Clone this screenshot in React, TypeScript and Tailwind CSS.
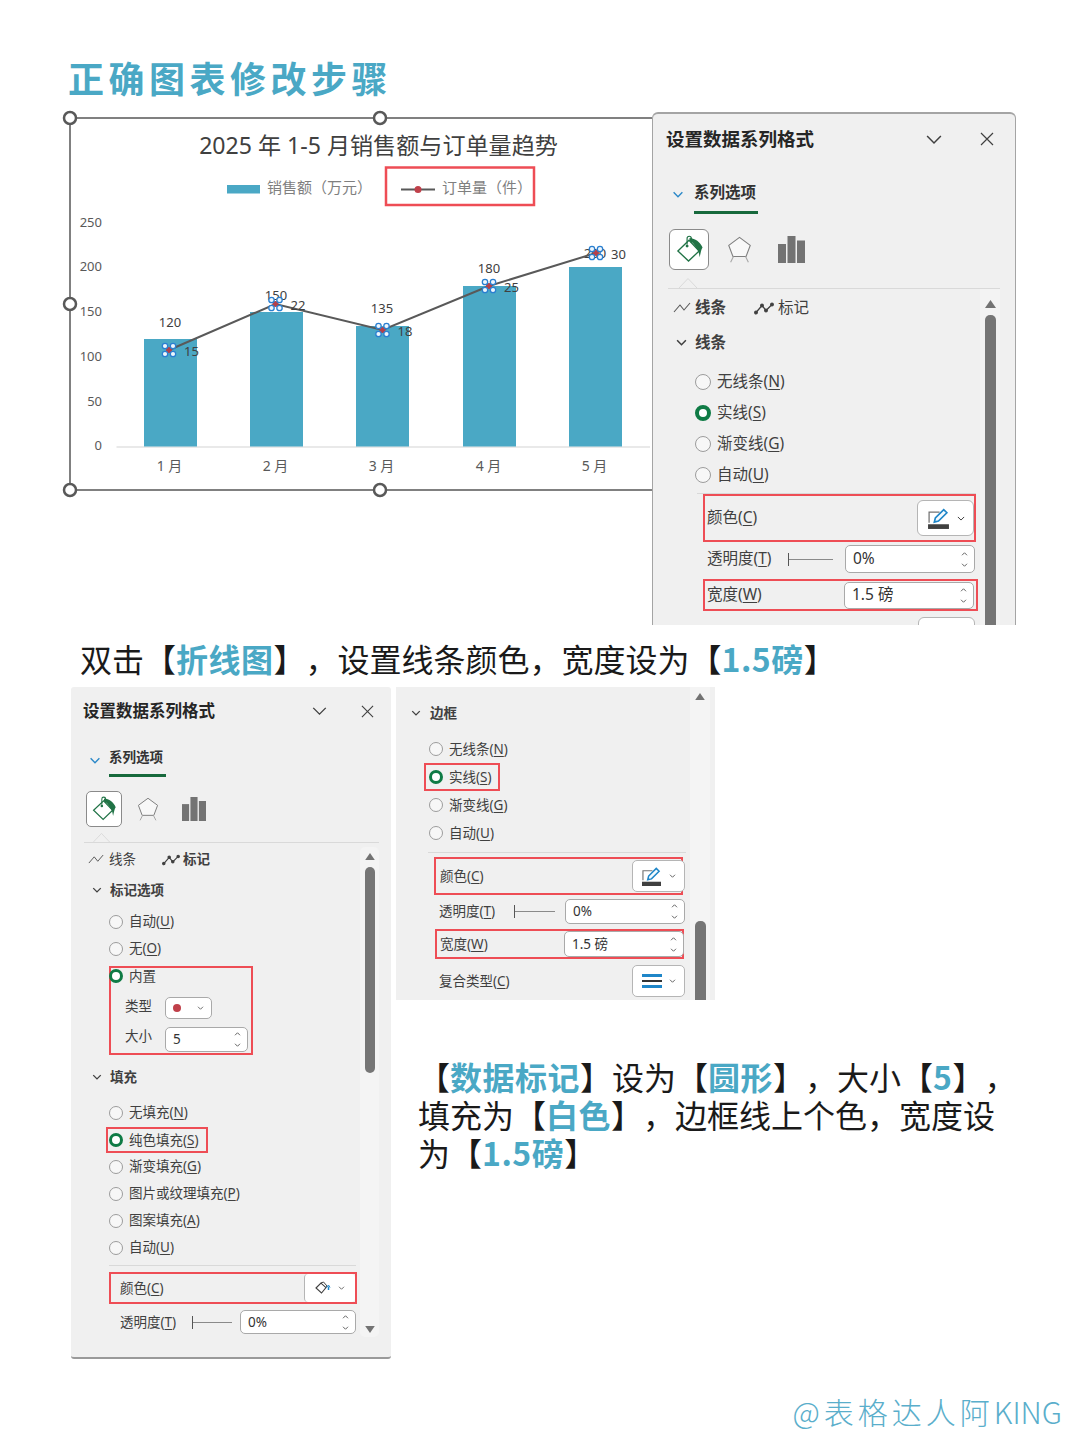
const TEAL = '#4aa8c5'
const BARS = [
  { x: 144, top: 339, label: '120', ly: 322 },
  { x: 250, top: 312, label: '150', ly: 295 },
  { x: 356, top: 326, label: '135', ly: 308 },
  { x: 463, top: 286, label: '180', ly: 268 },
  { x: 569, top: 267, label: '200', ly: 253 },
]
const POINTS = [
  { x: 169, y: 350, v: '15' },
  { x: 275.5, y: 304, v: '22' },
  { x: 382.5, y: 330, v: '18' },
  { x: 489, y: 286, v: '25' },
  { x: 596, y: 253, v: '30' },
]
const HANDLES = [[70, 118], [380, 118], [70, 304], [70, 490], [380, 490]]
const RED = '#ee4d55'

function Chart() {
  return (
    <svg viewBox="60 108 592 392" className="block h-[392px] w-[592px] shrink-0" fontFamily="'Noto Sans','Noto Sans CJK SC',sans-serif">
      <path d="M652 118H70V490H652" fill="none" stroke="#808080" strokeWidth="2" />
      {HANDLES.map(([x, y]) => (
        <circle key={`${x}-${y}`} cx={x} cy={y} r="6" fill="#fff" stroke="#595959" strokeWidth="2.5" />
      ))}
      <text x="378.5" y="154" textAnchor="middle" fontSize="23.1" fill="#404040">2025 年 1-5 月销售额与订单量趋势</text>
      <rect x="227" y="185" width="33" height="8.5" fill={TEAL} />
      <text x="267" y="193" fontSize="15" fill="#7f7f7f">销售额（万元）</text>
      <rect x="386" y="167.5" width="148" height="37.5" fill="none" stroke={RED} strokeWidth="2.5" />
      <path d="M401 189.5H435" stroke="#595959" strokeWidth="2" />
      <circle cx="418" cy="189.5" r="3.5" fill="#c0404a" />
      <text x="442" y="193" fontSize="15" fill="#7f7f7f">订单量（件）</text>
      {[['250', 222], ['200', 266], ['150', 311], ['100', 356], ['50', 401], ['0', 445]].map(([t, y]) => (
        <text key={t} x="102" y={Number(y) + 4.5} textAnchor="end" fontSize="13" fill="#595959">{t}</text>
      ))}
      <path d="M116.5 447H650" stroke="#e2e2e2" strokeWidth="1.5" />
      {BARS.map(b => (
        <rect key={b.x} x={b.x} y={b.top} width="53" height={446.5 - b.top} fill={TEAL} />
      ))}
      {BARS.map((b, i) => (
        <g key={b.label} fontSize="13" fill="#404040">
          <text x={b.x + 26} y={b.ly + 4.5} textAnchor="middle">{b.label}</text>
          <text x={b.x + 25.5} y="471" textAnchor="middle" fontSize="14" fill="#595959">{i + 1} 月</text>
        </g>
      ))}
      <polyline points={POINTS.map(p => `${p.x},${p.y}`).join(' ')} fill="none" stroke="#595959" strokeWidth="2" />
      {POINTS.map(p => (
        <g key={p.v}>
          <circle cx={p.x} cy={p.y} r="3" fill="#b5404a" />
          {[[-4, -4], [4, -4], [-4, 4], [4, 4]].map(([dx, dy]) => (
            <circle key={`${dx}${dy}`} cx={p.x + dx} cy={p.y + dy} r="2.7" fill="#eef6fd" stroke="#2a7fd0" strokeWidth="1.3" />
          ))}
          <text x={p.x + 15} y={p.y + 6} fontSize="13" fill="#404040">{p.v}</text>
        </g>
      ))}
    </svg>
  )
}

function Chevron({ className, color = '#404040', sw = 1.6 }: { className: string; color?: string; sw?: number }) {
  return (
    <svg viewBox="0 0 12 8" className={className} fill="none" stroke={color} strokeWidth={sw}>
      <path d="M1 1.5 6 6.5 11 1.5" />
    </svg>
  )
}

function Close({ className }: { className: string }) {
  return (
    <svg viewBox="0 0 14 14" className={className} fill="none" stroke="#404040" strokeWidth="1.2">
      <path d="M1 1 13 13M13 1 1 13" />
    </svg>
  )
}

function FillIcon({ className }: { className: string }) {
  return (
    <svg viewBox="0 0 30 30" className={className} fill="none">
      <path d="M3 16.5 14.5 5.5 25 16.5 14 27Z" stroke="#217346" strokeWidth="1.4" />
      <path d="M12.5 10V3.5a2.2 2.2 0 0 1 4.4 0V8" stroke="#217346" strokeWidth="1.2" />
      <circle cx="12.5" cy="11.5" r="1.5" fill="#217346" />
      <path d="M15 3c6 .5 11 4 13.5 10-1.5 2-2 6-3 10-.5-3-1-7-3.500-9.500C20 10 18 7 15 6Z" fill="#217346" />
    </svg>
  )
}

function PentagonIcon({ className }: { className: string }) {
  return (
    <svg viewBox="0 0 26 30" className={className} fill="none" stroke="#808080">
      <path d="M13 1.500 24.500 10 20 22H6L1.500 10Z" fill="#f8f8f8" strokeWidth="1.2" />
      <path d="M6.500 22 3.500 28M19.500 22 22.500 28" stroke="#a8a8a8" strokeWidth="1.2" />
    </svg>
  )
}

function BarsIcon({ className }: { className: string }) {
  return (
    <svg viewBox="0 0 27 27" className={className} fill="#737373">
      <rect x="0" y="8" width="8" height="19" />
      <rect x="9.500" y="0" width="8" height="27" />
      <rect x="19" y="4.500" width="8" height="22.500" />
    </svg>
  )
}

function LineTabIcon({ className }: { className: string }) {
  return (
    <svg viewBox="0 0 18 12" className={className} fill="none" stroke="#595959" strokeWidth="1.1">
      <path d="M1 10 7 3 11 8 17 1" />
    </svg>
  )
}

function MarkerTabIcon({ className }: { className: string }) {
  return (
    <svg viewBox="0 0 20 12" className={className} fill="#404040" stroke="#404040" strokeWidth="1.3">
      <path d="M2 10 8 3 12 8 18 2" fill="none" />
      <circle cx="2" cy="10" r="1.300" />
      <circle cx="8" cy="3" r="1.300" />
      <circle cx="12" cy="8" r="1.300" />
      <circle cx="18" cy="2" r="1.300" />
    </svg>
  )
}

function PenIcon({ className }: { className: string }) {
  return (
    <svg viewBox="0 0 22 20" className={className} fill="none">
      <path d="M2 14V4H12" stroke="#737373" strokeWidth="1.2" />
      <path d="M7 13.500 8 9.500 16 1.500 19 4.500 11 12.500Z" fill="#f4fbff" stroke="#1f86c8" strokeWidth="1.6" />
      <rect x="1" y="15.500" width="20" height="4.500" fill="#404040" />
    </svg>
  )
}

function BucketSmall({ className }: { className: string }) {
  return (
    <svg viewBox="0 0 16 14" className={className} fill="none">
      <path d="M1 7 6 2 11 6.500 6.500 12Z" stroke="#404040" strokeWidth="1.100" />
      <path d="M6 2 8.500 1 12 5 11 6.500Z" fill="#fff" stroke="#404040" strokeWidth="1" />
      <path d="M13.500 5.500v3.500" stroke="#1f86c8" strokeWidth="1.500" />
      <path d="M11.500 6.500 13.500 4 15 6.500" stroke="#1f86c8" strokeWidth="1" />
    </svg>
  )
}

function Triangle({ className, down }: { className: string; down?: boolean }) {
  return (
    <svg viewBox="0 0 11 8" className={className} fill="#737373">
      <path d={down ? 'M0 0H11L5.500 8Z' : 'M5.500 0 11 8H0Z'} />
    </svg>
  )
}

function Notch({ className }: { className: string }) {
  return (
    <svg viewBox="0 0 18 10" className={className} fill="none" stroke="#d9d9d9">
      <path d="M0 10 9 .5 18 10" />
    </svg>
  )
}

function Acc({ t, k }: { t: string; k: string }) {
  return (
    <span>
      {t}(<u className="underline-offset-2">{k}</u>)
    </span>
  )
}

function Dot({ on, big }: { on?: boolean; big?: boolean }) {
  if (big) {
    return on
      ? <span className="h-[16px] w-[16px] shrink-0 rounded-full border-[4px] border-[#0f7b45] bg-white" />
      : <span className="h-[16px] w-[16px] shrink-0 rounded-full border border-[#9c9c9c] bg-[#f7f7f7]" />
  }
  return on
    ? <span className="h-[14px] w-[14px] shrink-0 rounded-full border-[3.500px] border-[#0f7b45] bg-white" />
    : <span className="h-[14px] w-[14px] shrink-0 rounded-full border border-[#9c9c9c] bg-[#f7f7f7]" />
}

function Spin({ value, className }: { value: string; className: string }) {
  return (
    <div className={`flex items-center justify-between rounded-[5px] border border-[#a9a9a9] bg-white pl-[7px] pr-[6px] text-[#333] ${className}`}>
      <span>{value}</span>
      <div className="flex flex-col gap-[7px]">
        <Chevron className="h-[4px] w-[7px] rotate-180" color="#333" sw={1.5} />
        <Chevron className="h-[4px] w-[7px]" color="#333" sw={1.5} />
      </div>
    </div>
  )
}

function Slider({ className }: { className: string }) {
  return (
    <div className={`flex items-center ${className}`}>
      <span className="h-[13px] w-px bg-[#555]" />
      <span className="h-px flex-1 bg-[#8a8a8a]" />
    </div>
  )
}

function PanelOne() {
  return (
    <div className="h-[513px] w-[364px] shrink-0 overflow-hidden rounded-t-[6px] border-x-[1.500px] border-t-2 border-[#a4a4a4] bg-[#f0f0f0] text-[15.500px] text-[#404040]">
      <div className="flex h-[50px] items-center pl-[13px] pr-[21px]">
        <span className="text-[18.500px] font-bold leading-none text-[#262626]">设置数据系列格式</span>
        <Chevron className="ml-auto h-[11px] w-[18px]" sw={1.1} />
        <Close className="ml-[37px] h-[14px] w-[14px]" />
      </div>
      <div className="flex h-[50px] pl-[19px]">
        <Chevron className="mr-[10px] mt-[27px] h-[7px] w-[12px]" color="#2b88c8" />
        <div className="w-[64px]">
          <div className="pt-[19px] text-[15.500px] font-bold leading-[18px] text-[#333]">系列选项</div>
          <div className="mt-[10px] h-[3px] bg-[#17693c]" />
        </div>
      </div>
      <div className="ml-[16px] mt-[15px] flex h-[41px] items-center">
        <div className="flex h-[41px] w-[40px] items-center justify-center rounded-[6px] border border-[#8a8a8a] bg-white">
          <FillIcon className="h-[29px] w-[29px]" />
        </div>
        <PentagonIcon className="ml-[18px] h-[28px] w-[25px]" />
        <BarsIcon className="ml-[26px] h-[27px] w-[27px]" />
      </div>
      <Notch className="ml-[26px] mt-[8px] block h-[10px] w-[18px]" />
      <div className="ml-[15px] mr-[15px] h-px bg-[#d9d9d9]" />
      <div className="flex h-[340px]">
        <div className="w-[327px] shrink-0">
          <div className="flex h-[38px] items-center pl-[20px]">
            <LineTabIcon className="mr-[4px] h-[12px] w-[18px]" />
            <span className="font-bold">线条</span>
            <MarkerTabIcon className="ml-[28px] mr-[4px] h-[13px] w-[20px]" />
            <span>标记</span>
          </div>
          <div className="flex h-[31px] items-center pl-[23px]">
            <Chevron className="mr-[8px] h-[7px] w-[11px]" sw={1.8} />
            <span className="font-bold">线条</span>
          </div>
          <div className="mt-[8px] flex flex-col pl-[42px]">
            <div className="flex h-[31px] items-center gap-[6px]"><Dot big /><Acc t="无线条" k="N" /></div>
            <div className="flex h-[31px] items-center gap-[6px]"><Dot big on /><Acc t="实线" k="S" /></div>
            <div className="flex h-[31px] items-center gap-[6px]"><Dot big /><Acc t="渐变线" k="G" /></div>
            <div className="flex h-[31px] items-center gap-[6px]"><Dot big /><Acc t="自动" k="U" /></div>
          </div>
          <div className="ml-[44px] mt-[3px] h-px w-[279px] bg-[#d9d9d9]" />
          <div className="ml-[50px] flex h-[48px] w-[273px] items-center justify-between border-2 border-[#ee4d55] pl-[2px] pr-0">
            <Acc t="颜色" k="C" />
            <div className="flex h-[36px] w-[57px] items-center justify-center gap-[7px] rounded-[6px] border border-[#b5b5b5] bg-white">
              <PenIcon className="h-[21px] w-[23px]" />
              <Chevron className="h-[5px] w-[8px]" sw={1.6} />
            </div>
          </div>
          <div className="ml-[54px] mt-[3px] flex h-[28px] w-[268px] items-center">
            <Acc t="透明度" k="T" />
            <Slider className="ml-[17px] w-[45px]" />
            <Spin value="0%" className="ml-auto h-[28px] w-[130px]" />
          </div>
          <div className="ml-[50px] mt-[6px] flex h-[32px] w-[275px] items-center border-2 border-[#ee4d55] pl-[2px]">
            <Acc t="宽度" k="W" />
            <Spin value="1.5 磅" className="ml-auto mr-[2px] h-[27px] w-[130px]" />
          </div>
          <div className="ml-[265px] mt-[6px] h-[30px] w-[57px] rounded-[6px] border border-[#b5b5b5] bg-white" />
        </div>
        <div className="flex w-[20px] shrink-0 flex-col items-center bg-[#f3f3f3] pt-[11px]">
          <Triangle className="h-[8px] w-[11px]" />
          <div className="mt-[7px] w-[11px] flex-1 rounded-t-[5px] bg-[#767676]" />
        </div>
      </div>
    </div>
  )
}

function PanelTwo() {
  return (
    <div className="h-[672px] w-[320px] shrink-0 rounded-[3px] border-b-2 border-[#9a9a9a] bg-[#f0f0f0] text-[13.500px] text-[#404040]">
      <div className="flex h-[48px] items-center pl-[12px] pr-[17px]">
        <span className="text-[16.500px] font-bold leading-none text-[#262626]">设置数据系列格式</span>
        <Chevron className="ml-auto h-[10px] w-[17px]" sw={1.1} />
        <Close className="ml-[33px] h-[13px] w-[13px]" />
      </div>
      <div className="flex h-[41px] pl-[18px]">
        <Chevron className="mr-[8px] mt-[22px] h-[7px] w-[12px]" color="#2b88c8" />
        <div className="w-[57px]">
          <div className="pt-[14px] text-[13.500px] font-bold leading-[16px] text-[#333]">系列选项</div>
          <div className="mt-[9px] h-[2.500px] bg-[#17693c]" />
        </div>
      </div>
      <div className="ml-[15px] mt-[15px] flex h-[36px] items-center">
        <div className="flex h-[36px] w-[36px] items-center justify-center rounded-[5px] border border-[#8a8a8a] bg-white">
          <FillIcon className="h-[26px] w-[26px]" />
        </div>
        <PentagonIcon className="ml-[15px] h-[25px] w-[22px]" />
        <BarsIcon className="ml-[23px] h-[24px] w-[24px]" />
      </div>
      <Notch className="ml-[22px] mt-[6px] block h-[9px] w-[17px]" />
      <div className="ml-[13px] mr-[12px] h-px bg-[#d9d9d9]" />
      <div className="flex h-[494px]">
        <div className="w-[289px] shrink-0">
          <div className="flex h-[33px] items-center pl-[17px]">
            <LineTabIcon className="mr-[5px] h-[11px] w-[16px]" />
            <span>线条</span>
            <MarkerTabIcon className="ml-[26px] mr-[3px] h-[12px] w-[18px]" />
            <span className="font-bold">标记</span>
          </div>
          <div className="flex h-[28px] items-center pl-[21px]">
            <Chevron className="mr-[8px] h-[6px] w-[10px]" sw={1.8} />
            <span className="font-bold">标记选项</span>
          </div>
          <div className="mt-[4px] flex flex-col pl-[38px]">
            <div className="flex h-[27px] items-center gap-[6px]"><Dot /><Acc t="自动" k="U" /></div>
            <div className="flex h-[27px] items-center gap-[6px]"><Dot /><Acc t="无" k="O" /></div>
          </div>
          <div className="ml-[38px] mt-[4px] h-[89px] w-[144px] border-2 border-[#ee4d55]">
            <div className="-ml-[2px] flex h-[16px] items-center gap-[6px]"><Dot on /><span>内置</span></div>
            <div className="mt-[13px] flex h-[22px] items-center">
              <span className="-mt-[4px] ml-[14px]">类型</span>
              <div className="ml-[13px] flex h-[22px] w-[47px] items-center justify-between rounded-[5px] border border-[#a9a9a9] bg-white px-[7px]">
                <span className="h-[8px] w-[8px] rounded-full bg-[#c0404a]" />
                <Chevron className="h-[4px] w-[7px]" color="#333" sw={1.4} />
              </div>
            </div>
            <div className="mt-[8px] flex h-[25px] items-center">
              <span className="-mt-[7px] ml-[14px]">大小</span>
              <Spin value="5" className="ml-[13px] h-[25px] w-[83px]" />
            </div>
          </div>
          <div className="mt-[8px] flex h-[28px] items-center pl-[21px]">
            <Chevron className="mr-[8px] h-[6px] w-[10px]" sw={1.8} />
            <span className="font-bold">填充</span>
          </div>
          <div className="mt-[8px] flex h-[27px] items-center gap-[6px] pl-[38px]"><Dot /><Acc t="无填充" k="N" /></div>
          <div className="ml-[35px] mt-[1px] flex h-[26px] w-[102px] items-center gap-[6px] border-2 border-[#ee4d55] pl-[1px]"><Dot on /><Acc t="纯色填充" k="S" /></div>
          <div className="flex flex-col pl-[38px]">
            <div className="flex h-[27px] items-center gap-[6px]"><Dot /><Acc t="渐变填充" k="G" /></div>
            <div className="flex h-[27px] items-center gap-[6px]"><Dot /><Acc t="图片或纹理填充" k="P" /></div>
            <div className="flex h-[27px] items-center gap-[6px]"><Dot /><Acc t="图案填充" k="A" /></div>
            <div className="flex h-[27px] items-center gap-[6px]"><Dot /><Acc t="自动" k="U" /></div>
          </div>
          <div className="ml-[38px] mt-[4px] h-px w-[247px] bg-[#d9d9d9]" />
          <div className="ml-[38px] mt-[6px] flex h-[32px] w-[248px] items-center justify-between border-2 border-[#ee4d55] pl-[9px]">
            <Acc t="颜色" k="C" />
            <div className="flex h-[28px] w-[51px] items-center justify-center gap-[7px] rounded-[4px] border-l border-[#b5b5b5] bg-white">
              <BucketSmall className="h-[14px] w-[16px]" />
              <Chevron className="h-[4px] w-[7px]" sw={1.5} />
            </div>
          </div>
          <div className="ml-[49px] mt-[6px] flex h-[24px] w-[236px] items-center">
            <Acc t="透明度" k="T" />
            <Slider className="ml-[16px] w-[40px]" />
            <Spin value="0%" className="ml-auto h-[24px] w-[116px]" />
          </div>
        </div>
        <div className="mt-[4px] flex h-[490px] w-[19px] shrink-0 flex-col items-center rounded-[5px] bg-[#f4f4f4] pt-[6px]">
          <Triangle className="h-[7px] w-[10px]" />
          <div className="mt-[7px] h-[206px] w-[10px] rounded-[5px] bg-[#767676]" />
          <Triangle down className="mt-auto mb-[4px] h-[7px] w-[10px]" />
        </div>
      </div>
    </div>
  )
}

function PanelThree() {
  return (
    <div className="flex h-[313px] w-[319px] overflow-hidden bg-[#f0f0f0] text-[13.500px] text-[#404040]">
      <div className="w-[294px] shrink-0">
        <div className="mt-[12px] flex h-[28px] items-center pl-[15px]">
          <Chevron className="mr-[9px] h-[6px] w-[10px]" sw={1.8} />
          <span className="font-bold">边框</span>
        </div>
        <div className="mt-[8px] flex h-[28px] items-center gap-[6px] pl-[33px]"><Dot /><Acc t="无线条" k="N" /></div>
        <div className="ml-[28px] flex h-[28px] w-[76px] items-center gap-[6px] border-2 border-[#ee4d55] pl-[3px]"><Dot on /><Acc t="实线" k="S" /></div>
        <div className="flex h-[28px] items-center gap-[6px] pl-[33px]"><Dot /><Acc t="渐变线" k="G" /></div>
        <div className="flex h-[28px] items-center gap-[6px] pl-[33px]"><Dot /><Acc t="自动" k="U" /></div>
        <div className="ml-[32px] mt-[5px] h-px w-[258px] bg-[#d9d9d9]" />
        <div className="ml-[38px] mt-[4px] flex h-[38px] w-[249px] items-center justify-between border-2 border-[#ee4d55] pl-[4px]">
          <Acc t="颜色" k="C" />
          <div className="-mr-[4px] flex h-[32px] w-[53px] items-center justify-center gap-[7px] rounded-[5px] border border-[#b5b5b5] bg-white">
            <PenIcon className="h-[19px] w-[21px]" />
            <Chevron className="h-[4px] w-[7px]" sw={1.6} />
          </div>
        </div>
        <div className="ml-[43px] mt-[4px] flex h-[25px] w-[246px] items-center">
          <Acc t="透明度" k="T" />
          <Slider className="ml-[19px] w-[41px]" />
          <Spin value="0%" className="ml-auto h-[25px] w-[120px]" />
        </div>
        <div className="ml-[39px] mt-[5px] flex h-[30px] w-[249px] items-center border-2 border-[#ee4d55] pl-[3px]">
          <Acc t="宽度" k="W" />
          <Spin value="1.5 磅" className="-mr-[2px] ml-auto h-[26px] w-[120px]" />
        </div>
        <div className="ml-[43px] mt-[6px] flex h-[32px] w-[246px] items-center justify-between">
          <Acc t="复合类型" k="C" />
          <div className="flex h-[32px] w-[53px] items-center justify-center gap-[7px] rounded-[5px] border border-[#b5b5b5] bg-white">
            <div className="flex w-[20px] flex-col gap-[3px]">
              <span className="h-[3px] bg-[#1f86c8]" />
              <span className="h-[2px] bg-[#333]" />
              <span className="h-[3px] bg-[#1f86c8]" />
            </div>
            <Chevron className="h-[4px] w-[7px]" sw={1.6} />
          </div>
        </div>
      </div>
      <div className="flex w-[20px] shrink-0 flex-col items-center bg-[#f4f4f4] pt-[6px]">
        <Triangle className="h-[7px] w-[10px]" />
        <div className="mt-[221px] w-[11px] flex-1 rounded-t-[5px] bg-[#767676]" />
      </div>
    </div>
  )
}

function Hi({ children }: { children: string }) {
  return <span className="font-bold tracking-[0.500px] text-[#4aa8c5]">{children}</span>
}

export default function App() {
  return (
    <div className="flex h-[1440px] w-[1080px] flex-col overflow-hidden bg-white font-['Noto_Sans','Noto_Sans_CJK_SC',sans-serif] [text-spacing-trim:space-all]">
      <div className="h-[112px] shrink-0 pl-[68px] pt-[51px]">
        <h1 className="font-['Noto_Sans_CJK_SC',sans-serif] text-[36px] font-bold leading-[52px] tracking-[4.500px] text-[#4aa8c5]">正确图表修改步骤</h1>
      </div>
      <div className="flex h-[513px] shrink-0 items-start pl-[60px]">
        <div className="-mt-[4px]"><Chart /></div>
        <PanelOne />
      </div>
      <div className="flex h-[62px] shrink-0 items-center whitespace-nowrap pl-[80px] pt-[4px] font-['Noto_Sans_CJK_SC',sans-serif] text-[32px] leading-none text-[#1a1a1a]">
        <span>双击【<Hi>折线图</Hi>】，设置线条颜色，宽度设为【<Hi>1.5磅</Hi>】</span>
      </div>
      <div className="flex h-[671px] shrink-0 items-start gap-[5px] pl-[71px]">
        <PanelTwo />
        <div>
          <PanelThree />
          <div className="ml-[22px] mt-[57px] whitespace-nowrap font-['Noto_Sans_CJK_SC',sans-serif] text-[32px] leading-[38px] text-[#1a1a1a]">
            <div>【<Hi>数据标记</Hi>】设为【<Hi>圆形</Hi>】，大小【<Hi>5</Hi>】，</div>
            <div>填充为【<Hi>白色</Hi>】，边框线上个色，宽度设</div>
            <div>为【<Hi>1.5磅</Hi>】</div>
          </div>
        </div>
      </div>
      <div className="mt-[33px] flex h-[40px] justify-end pr-[18px] font-['Noto_Sans_CJK_SC',sans-serif] text-[30px] font-light leading-[40px] tracking-[4px] text-[#5aaecb]">
        <span>@表格达人阿<span className="tracking-[0px]">KING</span></span>
      </div>
    </div>
  )
}
